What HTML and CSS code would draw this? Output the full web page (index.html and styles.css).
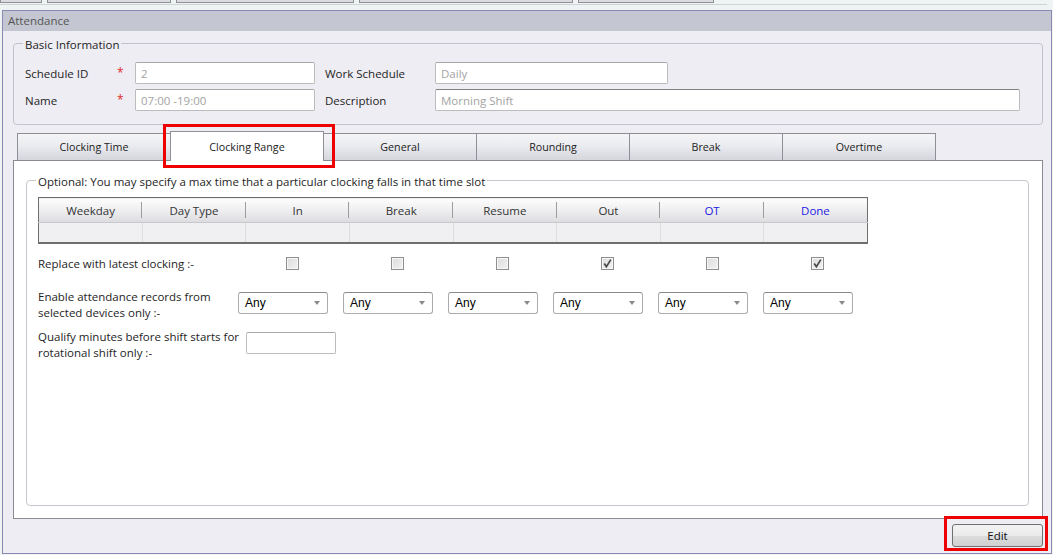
FILE: index.html
```html
<!DOCTYPE html>
<html>
<head>
<meta charset="utf-8">
<title>Attendance</title>
<link rel="stylesheet" href="styles.css">
</head>
<body>
<div class="topstrip">
  <div class="ghosts">
    <span class="ghost g1"></span>
    <span class="ghost g2"></span>
    <span class="ghost g3"></span>
    <span class="ghost g4"></span>
    <span class="ghost g5"></span>
  </div>
  <div class="ghost-line"></div>
</div>
<div class="window">
  <div class="win-title">Attendance</div>
  <div class="win-body">
    <fieldset class="group basic">
      <legend>Basic Information</legend>
      <div class="basic-grid">
        <span class="lbl">Schedule ID</span><span class="req">*</span><input class="tb" value="2" readonly>
        <span class="lbl lbl2">Work Schedule</span><input class="tb w-sched" value="Daily" readonly>
        <span class="lbl">Name</span><span class="req">*</span><input class="tb" value="07:00 -19:00" readonly>
        <span class="lbl lbl2">Description</span><input class="tb w-desc dark-top" value="Morning Shift" readonly>
      </div>
    </fieldset>

    <div class="tabs">
      <div class="tab first">Clocking Time</div>
      <div class="tab active"><span class="hl hl-tab"></span>Clocking Range</div>
      <div class="tab">General</div>
      <div class="tab">Rounding</div>
      <div class="tab">Break</div>
      <div class="tab">Overtime</div>
    </div>

    <div class="panel">
      <fieldset class="group range">
        <legend>Optional: You may specify a max time that a particular clocking falls in that time slot</legend>
        <table class="grid">
          <thead>
            <tr>
              <th>Weekday</th><th>Day Type</th><th>In</th><th>Break</th><th>Resume</th><th>Out</th><th class="blue">OT</th><th class="blue last">Done</th>
            </tr>
          </thead>
          <tbody>
            <tr><td></td><td></td><td></td><td></td><td></td><td></td><td></td><td class="last"></td></tr>
          </tbody>
        </table>

        <div class="opts">
          <div class="opt-label r1">Replace with latest clocking :-</div>
          <div class="cell r1c"><span class="cb"></span></div>
          <div class="cell r1c"><span class="cb"></span></div>
          <div class="cell r1c"><span class="cb"></span></div>
          <div class="cell r1c"><span class="cb"><svg viewBox="0 0 13 13" width="13" height="13"><path d="M3.2 6.4 L5.4 9.6 L9.8 2.6" fill="none" stroke="#4a4a4a" stroke-width="1.7"/></svg></span></div>
          <div class="cell r1c"><span class="cb"></span></div>
          <div class="cell r1c"><span class="cb"><svg viewBox="0 0 13 13" width="13" height="13"><path d="M3.2 6.4 L5.4 9.6 L9.8 2.6" fill="none" stroke="#4a4a4a" stroke-width="1.7"/></svg></span></div>

          <div class="opt-label r2">Enable attendance records from<br>selected devices only :-</div>
          <div class="cell r2c"><div class="dd">Any<span class="arr"></span></div></div>
          <div class="cell r2c"><div class="dd">Any<span class="arr"></span></div></div>
          <div class="cell r2c"><div class="dd">Any<span class="arr"></span></div></div>
          <div class="cell r2c"><div class="dd">Any<span class="arr"></span></div></div>
          <div class="cell r2c"><div class="dd">Any<span class="arr"></span></div></div>
          <div class="cell r2c"><div class="dd">Any<span class="arr"></span></div></div>

          <div class="opt-label r3">Qualify minutes before shift starts for<br>rotational shift only :-</div>
          <div class="cell r3c"><input class="tb small"></div>
        </div>
      </fieldset>
    </div>

    <div class="footer">
      <div class="btnwrap"><span class="hl hl-btn"></span><button class="btn">Edit</button></div>
    </div>
  </div>
</div>
</body>
</html>
```
FILE: styles.css
```css
* { box-sizing: border-box; }
html, body { margin: 0; padding: 0; }
body {
  width: 1053px;
  height: 555px;
  overflow: hidden;
  background: #eef4f3;
  font-family: "Open Sans", "Noto Sans", "Liberation Sans", sans-serif;
  font-size: 11.5px;
  color: #1e1e1e;
}

/* strip of tab bottoms above the window */
.topstrip { height: 10px; }
.ghosts { display: flex; height: 3px; }
.ghost {
  height: 3px;
  background: #dcdce0;
  border: 1px solid #8f8f95;
  border-top: none;
}
.g1 { width: 42px; }
.g2 { width: 124px; margin-left: 5px; }
.g3 { width: 178px; margin-left: 5px; }
.g4 { width: 214px; margin-left: 5px; }
.g5 { width: 136px; margin-left: 5px; }
.ghost-line { height: 1px; margin-top: 1px; width: 1047px; background: #cfd3d3; }

/* window */
.window {
  margin-left: 2px;
  width: 1050px;
  height: 544px;
  border: 1px solid #8d88b3;
  background: #eeedf3;
  display: flex;
  flex-direction: column;
}
.win-title {
  height: 20px;
  line-height: 20px;
  background: #c4c7d2;
  padding-left: 5px;
  font-size: 11.5px;
  color: #555;
}
.win-body {
  flex: 1;
  padding: 2px 8px 0 10px;
  display: flex;
  flex-direction: column;
}

/* group boxes */
.group {
  margin: 0;
  min-width: 0;
  border: 1px solid #c2c2ca;
  border-radius: 4px;
}
.group legend {
  padding: 4px 2px 0;
  margin-left: -2px;
  line-height: 16px;
  font-size: 11.5px;
  color: #1e1e1e;
}
.basic { padding: 9px 21px 13px 11px; }

.basic-grid {
  display: grid;
  grid-template-columns: 92px 18px 180px 120px 1fr;
  row-gap: 5px;
  align-items: center;
}
.lbl { font-size: 11.5px; }
.lbl2 { padding-left: 10px; }
.req { color: #e02a2a; font-size: 12px; position: relative; top: -1px; }

.tb {
  height: 22px;
  border: 1px solid #bcbcbc;
  border-top-color: #a8a8a8;
  border-radius: 2px;
  background: #fff;
  padding: 0 5px;
  font-family: "Open Sans", "Noto Sans", "Liberation Sans", sans-serif;
  font-size: 11.5px;
  color: #a3a3a3;
  outline: none;
  margin: 0;
  width: 180px;
}
.w-sched { width: 233px; }
.w-desc { width: 585px; }
.dark-top { border-top-color: #808080; }

/* tabs */
.tabs {
  margin-top: 6px;
  height: 29px;
  display: flex;
  align-items: flex-end;
  padding-left: 4px;
}
.tab {
  width: 154px;
  height: 27px;
  margin-left: -1px;
  border: 1px solid #8f8f98;
  border-bottom: none;
  background: linear-gradient(#f5f5f7, #ebecf0 45%, #dcdee4 80%, #d4d6dc);
  display: flex;
  align-items: center;
  justify-content: center;
  font-size: 10.7px;
  color: #222;
}
.tab.first { margin-left: 0; }
.tab.active {
  height: 30px;
  margin-bottom: -1px;
  background: #fff;
  position: relative;
  z-index: 1;
}

/* red highlight annotations */
.hl {
  position: absolute;
  border: 3px solid #ee0000;
  pointer-events: none;
}
.hl-tab { left: -8px; top: -8px; width: 172px; height: 44px; }
.hl-btn { left: -8px; top: -8px; width: 104px; height: 35px; }

/* tab panel */
.panel {
  height: 359px;
  background: #fff;
  border: 1px solid #8a8a93;
  display: flex;
  flex-direction: column;
}
.range {
  flex: 1;
  margin: 9px 13px 12px 12px;
  padding: 7px 11px 0 11px;
  border-color: #c6c7cf;
}

/* table */
.grid {
  width: 830px;
  border-collapse: collapse;
  table-layout: fixed;
  border: 1px solid #6e6e6e;
  border-bottom: 2px solid #6e6e6e;
}
.grid th {
  height: 25px;
  padding: 0;
  font-weight: normal;
  font-size: 11.5px;
  color: #333;
  border-bottom: 1px solid #c9c9cd;
  background:
    linear-gradient(#9c9c9c, #9c9c9c) no-repeat right center / 1px 16px,
    linear-gradient(#fdfdfd, #eeeef0 50%, #dcdce0);
}
.grid th.last { background: linear-gradient(#fdfdfd, #eeeef0 50%, #dcdce0); }
.grid th.blue { color: #1b1be0; }
.grid td {
  height: 20px;
  padding: 0;
  background: #f0f0f2;
  border-right: 1px solid #dedee2;
}
.grid td.last { border-right: none; }

/* options */
.opts {
  margin-top: 7px;
  display: grid;
  grid-template-columns: 200px repeat(6, 105px);
  grid-template-rows: 26px 50px auto;
  align-items: start;
}
.opt-label { font-size: 11.5px; line-height: 16px; white-space: nowrap; }
.r1 { margin-top: 5px; }
.r2 { margin-top: 12px; }
.r3 { margin-top: 2px; }
.r1c { padding-top: 6px; }
.r2c { padding-top: 15px; }
.r3c { padding-top: 5px; padding-left: 8px; grid-column: 2 / span 2; }

.cb {
  display: block;
  width: 13px;
  height: 13px;
  margin-left: 48px;
  border: 1px solid #8e8f90;
  background: linear-gradient(135deg, #dcdcdc, #f2f2f2);
  box-shadow: inset 0 0 0 1px #f7f7f7;
  position: relative;
}
.cb svg { display: block; margin: -1px 0 0 -1px; }

.dd {
  width: 90px;
  height: 22px;
  border: 1px solid #acacac;
  border-top-color: #8a8a8a;
  border-radius: 3px;
  background: #fff;
  display: flex;
  align-items: center;
  justify-content: space-between;
  padding: 0 7px 0 6px;
  font-family: "Liberation Sans", Arial, sans-serif;
  font-size: 12px;
  color: #000;
}
.arr {
  width: 0;
  height: 0;
  border-left: 3.5px solid transparent;
  border-right: 3.5px solid transparent;
  border-top: 4px solid #8a8a8a;
}
.tb.small { width: 90px; }

/* footer */
.footer {
  display: flex;
  justify-content: flex-end;
  padding-top: 5px;
}
.btnwrap { position: relative; }
.btn {
  display: block;
  width: 91px;
  height: 23px;
  margin: 0;
  border: 1px solid #707070;
  border-radius: 3px;
  background: linear-gradient(#f3f3f3, #ebebeb 50%, #dddddd 51%, #cfcfcf);
  font-family: "Open Sans", "Noto Sans", "Liberation Sans", sans-serif;
  font-size: 11.5px;
  color: #111;
  padding: 0;
}
```
